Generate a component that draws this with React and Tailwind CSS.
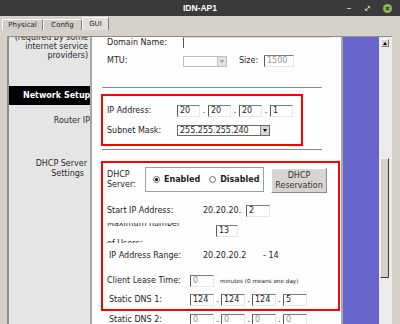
import React from "react";

const TextBox = ({ value, className = "", dim }) => (
  <div
    className={`h-[12px] bg-white border border-t-[#7c7c7c] border-l-[#5a5a5a] border-r-[#e6e6e6] border-b-[#e6e6e6] pl-[2px] text-[8px] leading-[10px] whitespace-nowrap ${
      dim ? "text-[#939393]" : "text-[#1c1c1c]"
    } ${className}`}
  >
    {value}
  </div>
);

const IpGroup = ({ values, boxClass, dotClass, dim }) => (
  <div className="flex items-center">
    {values.map((v, i) => (
      <React.Fragment key={i}>
        {i > 0 && (
          <span className={`${dotClass} text-center leading-[12px]`}>.</span>
        )}
        <TextBox value={v} className={boxClass} dim={dim} />
      </React.Fragment>
    ))}
  </div>
);

const Arrow = ({ up, color = "border-t-black" }) =>
  up ? (
    <div className="w-0 h-0 border-l-[2.5px] border-r-[2.5px] border-b-[3px] border-l-transparent border-r-transparent border-b-black" />
  ) : (
    <div
      className={`w-0 h-0 border-l-[2.5px] border-r-[2.5px] border-t-[3px] border-l-transparent border-r-transparent ${color}`}
    />
  );

const Select = ({ value, className = "", disabled }) => (
  <div
    className={`h-[11px] flex bg-white border ${
      disabled ? "border-[#bdbdbd]" : "border-[#6a6a6a]"
    } ${className}`}
  >
    <div className="flex-1 pl-[2px] text-[8px] leading-[9px] whitespace-nowrap">
      {value}
    </div>
    <div
      className={`w-[9px] flex items-center justify-center border-l ${
        disabled
          ? "bg-[#e4e2de] border-[#c8c8c8]"
          : "bg-[#d8d5cf] border-[#8a8a8a]"
      }`}
    >
      <Arrow color={disabled ? "border-t-[#9a9a9a]" : "border-t-black"} />
    </div>
  </div>
);

const Radio = ({ checked }) => (
  <div className="w-[7px] h-[7px] rounded-full border border-[#6a6a6a] bg-white flex items-center justify-center">
    {checked && <div className="w-[3px] h-[3px] rounded-full bg-black" />}
  </div>
);

const Tab = ({ label, active, className = "" }) => (
  <div
    className={`flex items-center justify-center text-[7px] text-[#222] border-l border-t border-r border-l-white border-t-white border-r-[#7d7d7d] ${
      active ? "h-[13px] bg-[#e2dfda]" : "h-[11px] bg-[#d3cfc8]"
    } ${className}`}
  >
    {label}
  </div>
);

export default function App() {
  return (
    <div className="w-[400px] h-[324px] overflow-hidden bg-[#d4d0c8] flex flex-col font-['DejaVu_Sans',sans-serif]">
      {/* window title */}
      <div className="h-[16px] shrink-0 bg-[#3a3a3a] grid grid-cols-[1fr_auto_1fr] items-center">
        <div />
        <div className="text-white font-bold text-[8.5px] font-['Liberation_Sans',sans-serif]">
          IDN-AP1
        </div>
        <div className="flex items-center justify-end pr-[8px]">
          <div className="w-[4px] h-[1px] bg-[#bdbdbd]" />
          <svg className="ml-[14px]" width="5" height="5" viewBox="0 0 5 5">
            <path d="M0.5 4.5 L4.5 0.5 M2.5 0.5 H4.5 V2.5 M0.5 2.5 V4.5 H2.5" stroke="#bdbdbd" strokeWidth="1" fill="none" />
          </svg>
          <div className="ml-[13px] w-[9px] h-[9px] rounded-full bg-[#8fb95f] flex items-center justify-center">
            <svg width="5" height="5" viewBox="0 0 5 5">
              <path d="M0.8 0.8 L4.2 4.2 M4.2 0.8 L0.8 4.2" stroke="#2c3a1e" strokeWidth="1.1" />
            </svg>
          </div>
        </div>
      </div>

      {/* tabs */}
      <div className="h-[20px] shrink-0 bg-[#d6d2cb] flex items-end pb-[6px] pl-[2px]">
        <Tab label="Physical" className="w-[41px]" />
        <Tab label="Config" className="w-[39px]" />
        <Tab label="GUI" active className="w-[27px]" />
      </div>

      {/* content */}
      <div className="flex-1 flex">
        <div className="w-[7px] bg-[#d4d0c8]" />
        <div className="flex-1 flex border-t border-[#8c8c8c]">
          {/* left labels */}
          <div className="w-[85px] bg-[#e5e5e5] border-l-2 border-r-2 border-l-[#8e8e8e] border-r-[#a5a5a5] overflow-hidden text-[8px] text-[#2a2a2a]">
            <div className="-mt-[4px] leading-[9px] text-right pr-[2px] whitespace-nowrap">
              <div>(required by some</div>
              <div>internet service</div>
              <div>providers)</div>
            </div>
            <div className="mt-[26px] h-[19px] bg-black text-white font-bold flex items-center pl-[14px] whitespace-nowrap">
              Network Setup
            </div>
            <div className="mt-[11px] leading-[9px] text-right whitespace-nowrap">
              Router IP
            </div>
            <div className="mt-[34px] leading-[9.5px] text-right whitespace-nowrap">
              <div className="pr-[3px]">DHCP Server</div>
              <div className="pr-[6px]">Settings</div>
            </div>
          </div>

          {/* main form */}
          <div className="w-[249px] bg-[#fefefe] overflow-hidden text-[8px] text-[#222]">
            <div className="flex items-center h-[11px]">
              <div className="ml-[15px] w-[76px] leading-[10px]">Domain Name:</div>
              <div className="h-[11px] w-[150px] bg-white border-l border-t border-l-[#555] border-t-[#e0e0e0]" />
            </div>

            <div className="mt-[7px] flex items-center h-[12px]">
              <div className="ml-[15px] w-[76px] leading-[10px]">MTU:</div>
              <Select disabled className="w-[44px]" />
              <div className="ml-[12px] w-[25px] leading-[10px]">Size:</div>
              <TextBox value="1500" dim className="w-[30px]" />
            </div>

            <div className="mt-[20px] ml-[10px] w-[220px] h-px bg-[#8a8a8a]" />

            <div className="mt-[6px] ml-[9px] w-[202px] h-[52px] border-2 border-[#ff0000]">
              <div className="mt-[9px] flex items-center h-[12px]">
                <div className="ml-[4px] w-[70px] leading-[10px]">IP Address:</div>
                <IpGroup
                  values={["20", "20", "20", "1"]}
                  boxClass="w-[23px]"
                  dotClass="w-[8px]"
                />
              </div>
              <div className="mt-[8px] flex items-center h-[11px]">
                <div className="ml-[4px] w-[70px] leading-[10px]">Subnet Mask:</div>
                <Select value="255.255.255.240" className="w-[93px]" />
              </div>
            </div>

            <div className="mt-[3px] ml-[10px] w-[220px] h-px bg-[#8a8a8a]" />

            <div className="mt-[11px] ml-[9px] w-[239px] h-[150px] border-2 border-[#ff0000]">
              <div className="mt-[4px] flex items-center h-[26px]">
                <div className="ml-[4px] w-[38px] leading-[10px]">
                  <div>DHCP</div>
                  <div>Server:</div>
                </div>
                <div className="w-[119px] h-[25px] self-start border border-[#9c9c9c] bg-white flex items-center pl-[7px] font-bold">
                  <Radio checked />
                  <span className="ml-[4px]">Enabled</span>
                  <div className="ml-[9px]">
                    <Radio />
                  </div>
                  <span className="ml-[4px]">Disabled</span>
                </div>
                <div className="ml-[7px] w-[56px] h-[25px] self-end bg-[#d8d5d0] border border-t-white border-l-white border-r-[#8a8a8a] border-b-[#8a8a8a] flex flex-col items-center justify-center leading-[10px] text-[#333]">
                  <div>DHCP</div>
                  <div>Reservation</div>
                </div>
              </div>

              <div className="mt-[12px] flex items-center h-[12px]">
                <div className="ml-[4px] w-[96px] leading-[10px]">Start IP Address:</div>
                <div className="w-[43px] leading-[10px]">20.20.20.</div>
                <TextBox value="2" className="w-[24px]" />
              </div>

              <div className="mt-[6px] flex h-[20px]">
                <div className="ml-[4px] w-[109px] h-[20px] overflow-hidden">
                  <div className="-mt-[9px] leading-[20px] whitespace-nowrap">
                    <div>Maximum number</div>
                    <div>of Users:</div>
                  </div>
                </div>
                <TextBox value="13" className="mt-[2px] w-[22px]" />
              </div>

              <div className="mt-[7px] flex items-center h-[12px]">
                <div className="ml-[6px] w-[94px] leading-[10px]">IP Address Range:</div>
                <div className="w-[60px] leading-[10px]">20.20.20.2</div>
                <div className="leading-[10px]">- 14</div>
              </div>

              <div className="mt-[13px] flex items-center h-[11px]">
                <div className="ml-[4px] w-[83px] leading-[10px]">Client Lease Time:</div>
                <TextBox value="0" dim className="w-[24px] h-[11px]" />
                <div className="ml-[6px] text-[5.7px] leading-[8px] whitespace-nowrap">
                  minutes (0 means one day)
                </div>
              </div>

              <div className="mt-[8px] flex items-center h-[12px]">
                <div className="ml-[6px] w-[81px] leading-[10px]">Static DNS 1:</div>
                <IpGroup
                  values={["124", "124", "124", "5"]}
                  boxClass="w-[24px]"
                  dotClass="w-[7px]"
                />
              </div>
            </div>

            <div className="mt-[3px] flex items-center h-[12px]">
              <div className="ml-[17px] w-[81px] leading-[10px]">Static DNS 2:</div>
              <IpGroup
                values={["0", "0", "0", "0"]}
                boxClass="w-[24px]"
                dotClass="w-[7px]"
                dim
              />
            </div>
          </div>

          <div className="w-[2px] bg-[#a8a8a8]" />
          <div className="w-[36px] bg-[#6666cc]" />

          {/* scrollbar */}
          <div className="w-[13px] bg-[#ebebeb] flex flex-col pl-[1px] pr-[3px]">
            <div className="mt-[2px] self-end w-[8px] h-[8px] bg-[#d8d5cf] border border-t-white border-l-white border-r-[#7a7a7a] border-b-[#7a7a7a] flex items-center justify-center">
              <Arrow up />
            </div>
            <div className="mt-[111px] w-[9px] h-[120px] bg-[#d4d0c8] border border-t-[#f4f4f4] border-l-[#f4f4f4] border-r-[#3c3c3c] border-b-[#3c3c3c]" />
          </div>
        </div>
        <div className="w-[8px] bg-[#d4d0c8]" />
      </div>
    </div>
  );
}
